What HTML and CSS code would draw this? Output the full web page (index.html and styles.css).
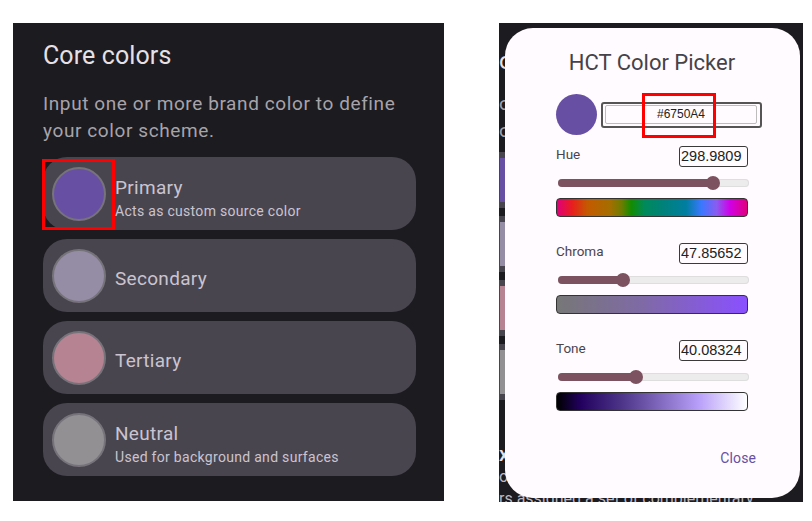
FILE: index.html
```html
<!DOCTYPE html>
<html lang="en">
<head>
<meta charset="utf-8">
<title>Core colors</title>
<link rel="stylesheet" href="styles.css">
</head>
<body>
<div class="page">
  <section class="core">
    <h1 class="core-title">Core colors</h1>
    <p class="core-desc">Input one or more brand color to define your color scheme.</p>
    <div class="cards">
      <div class="card">
        <span class="swatch sw-primary"></span>
        <div class="card-text two">
          <div class="card-name">Primary</div>
          <div class="card-sub">Acts as custom source color</div>
        </div>
        <span class="highlight hl-swatch"></span>
      </div>
      <div class="card">
        <span class="swatch sw-secondary"></span>
        <div class="card-text one">
          <div class="card-name">Secondary</div>
        </div>
      </div>
      <div class="card">
        <span class="swatch sw-tertiary"></span>
        <div class="card-text one">
          <div class="card-name">Tertiary</div>
        </div>
      </div>
      <div class="card">
        <span class="swatch sw-neutral"></span>
        <div class="card-text two">
          <div class="card-name">Neutral</div>
          <div class="card-sub">Used for background and surfaces</div>
        </div>
      </div>
    </div>
  </section>

  <section class="picker-area">
    <div class="backdrop">
      <div class="bd-title">o</div>
      <div class="bd-desc">ou<br>ou</div>
      <div class="bd-cards">
        <div class="bd-card"><span class="bd-dot sw-primary"></span></div>
        <div class="bd-card"><span class="bd-dot sw-secondary"></span></div>
        <div class="bd-card"><span class="bd-dot sw-tertiary"></span></div>
        <div class="bd-card"><span class="bd-dot sw-neutral"></span></div>
      </div>
      <div class="bd-head">xt</div>
      <div class="bd-line">ou</div>
      <div class="bd-line">rs assigned a set of complementary</div>
    </div>

    <div class="dialog">
      <h2 class="dlg-title">HCT Color Picker</h2>
      <div class="hex-row">
        <span class="swatch-lg"></span>
        <div class="hex-box">
          <div class="hex-input">#6750A4</div>
          <span class="highlight hl-hex"></span>
        </div>
      </div>

      <div class="field">
        <div class="field-head">
          <span class="field-label">Hue</span>
          <span class="field-input">298.9809</span>
        </div>
        <div class="slider" style="--v:81%"><span class="slider-fill"></span><span class="slider-thumb"></span></div>
        <div class="grad grad-hue"></div>
      </div>

      <div class="field">
        <div class="field-head">
          <span class="field-label">Chroma</span>
          <span class="field-input">47.85652</span>
        </div>
        <div class="slider" style="--v:34%"><span class="slider-fill"></span><span class="slider-thumb"></span></div>
        <div class="grad grad-chroma"></div>
      </div>

      <div class="field">
        <div class="field-head">
          <span class="field-label">Tone</span>
          <span class="field-input">40.08324</span>
        </div>
        <div class="slider" style="--v:41%"><span class="slider-fill"></span><span class="slider-thumb"></span></div>
        <div class="grad grad-tone"></div>
      </div>

      <div class="actions">
        <span class="close">Close</span>
      </div>
    </div>
  </section>
</div>
</body>
</html>
```

FILE: styles.css
```css
* { box-sizing: border-box; }

body {
  margin: 0;
  background: #ffffff;
  font-family: Roboto, "Noto Sans", sans-serif;
}

.page {
  display: flex;
  align-items: flex-start;
  gap: 55px;
  padding: 23px 0 0 13px;
}

/* ---------- left panel ---------- */
.core {
  width: 431px;
  height: 478px;
  background: #1c1b1f;
  padding: 17px 28px 0 30px;
}

.core-title {
  margin: 0;
  font-size: 25px;
  line-height: 32px;
  font-weight: 400;
  letter-spacing: 0.1px;
  color: #e6e1e5;
}

.core-desc {
  margin: 18px 0 0;
  font-size: 19px;
  line-height: 27px;
  letter-spacing: 0.6px;
  color: #a7a3ab;
}

.cards {
  display: flex;
  flex-direction: column;
  gap: 9px;
  margin-top: 13px;
}

.card {
  position: relative;
  height: 73px;
  background: #49454f;
  border-radius: 24px;
  display: flex;
  align-items: center;
  gap: 9px;
  padding-left: 9px;
}

.swatch {
  flex: none;
  width: 54px;
  height: 54px;
  border-radius: 50%;
  border: 2px solid #77737b;
}

.sw-primary { background: #6750a4; }
.sw-secondary { background: #958da5; }
.sw-tertiary { background: #b58392; }
.sw-neutral { background: #939094; }

.card-text { color: #cac4d0; }
.card-text.two { padding-top: 14px; }
.card-text.one { padding-top: 6px; }

.card-name {
  font-size: 19px;
  line-height: 22px;
  letter-spacing: 0.3px;
}

.card-sub {
  font-size: 14px;
  line-height: 25px;
  letter-spacing: 0.3px;
}

.highlight {
  position: absolute;
  border: 3px solid #ff0000;
}

.hl-swatch {
  left: -1px;
  top: 2px;
  width: 73px;
  height: 71px;
}

/* ---------- right panel ---------- */
.picker-area {
  position: relative;
  width: 304px;
  height: 479px;
  background: #1c1b1f;
  overflow: hidden;
}

.backdrop {
  display: flex;
  flex-direction: column;
  padding-top: 25px;
  white-space: nowrap;
}

.bd-title {
  font-size: 24px;
  line-height: 26px;
  color: #e6e1e5;
}

.bd-desc {
  margin-top: 16px;
  font-size: 19px;
  line-height: 27px;
  color: #a7a3ab;
}

.bd-cards {
  display: flex;
  flex-direction: column;
  gap: 8px;
  margin-top: 8px;
}

.bd-card {
  height: 56px;
  width: 40px;
  background: #48454e;
  padding: 6px 0 6px 1px;
}

.bd-dot {
  display: block;
  width: 30px;
  height: 44px;
}

.bd-head {
  margin-top: 42px;
  font-size: 20px;
  line-height: 24px;
  font-weight: 500;
  color: #e6e1e5;
}

.bd-line {
  font-size: 16px;
  line-height: 22px;
  color: #bdb8c2;
}

.dialog {
  position: absolute;
  left: 6px;
  top: 5px;
  width: 295px;
  height: 470px;
  background: #fffbfe;
  border-radius: 28px;
  padding: 21px 52px 0 51px;
  display: flex;
  flex-direction: column;
}

.dlg-title {
  margin: 0;
  text-align: center;
  font-size: 22px;
  line-height: 28px;
  font-weight: 400;
  color: #45424a;
}

.hex-row {
  display: flex;
  align-items: center;
  gap: 4px;
  margin-top: 17px;
}

.swatch-lg {
  flex: none;
  width: 41px;
  height: 41px;
  border-radius: 50%;
  background: #6750a4;
}

.hex-box {
  position: relative;
  flex: none;
  width: 161px;
  height: 26px;
  border: 2px solid #555555;
  border-radius: 3px;
  padding: 1px 3px 2px 2px;
  display: flex;
}

.hex-input {
  flex: 1;
  border: 1px solid #bdbdbd;
  border-radius: 2px;
  font-family: "Liberation Sans", Arial, sans-serif;
  font-size: 12px;
  line-height: 17px;
  text-align: center;
  color: #222222;
}

.hl-hex {
  left: 39px;
  top: -11px;
  width: 74px;
  height: 45px;
}

.field {
  display: flex;
  flex-direction: column;
  margin-top: 26px;
}

.hex-row + .field { margin-top: 11px; }

.field-head {
  display: flex;
  justify-content: space-between;
  align-items: flex-start;
  height: 21px;
}

.field-label {
  font-size: 13.5px;
  line-height: 16px;
  color: #49454f;
}

.field-input {
  width: 69px;
  height: 21px;
  border: 1px solid #3a3a3a;
  border-radius: 3px;
  padding-left: 1px;
  font-family: "Liberation Sans", Arial, sans-serif;
  font-size: 14.5px;
  line-height: 19px;
  color: #222222;
}

.slider {
  position: relative;
  width: 191px;
  height: 8px;
  margin: 12px 0 0 2px;
  border-radius: 4px;
  background: #ececec;
  box-shadow: inset 0 0 0 1px #dedede;
}

.slider-fill {
  display: block;
  width: var(--v);
  height: 100%;
  border-radius: 4px;
  background: #7d5260;
}

.slider-thumb {
  position: absolute;
  left: var(--v);
  top: 50%;
  width: 14px;
  height: 14px;
  margin: -7px 0 0 -7px;
  border-radius: 50%;
  background: #7d5260;
}

.grad {
  width: 192px;
  height: 19px;
  margin-top: 11px;
  border: 1px solid #333333;
  border-radius: 4px;
}

.grad-hue {
  background: linear-gradient(to right,
    #e0007a 0%, #e81e1e 8%, #c45a00 16%, #a46e00 28%, #6e7c00 34%,
    #138c00 39%, #008a5a 46%, #00827a 56%, #007ea0 68%, #3a78ff 76%,
    #8a5cf0 84%, #d000e8 91%, #e0007a 100%);
}

.grad-chroma {
  background: linear-gradient(to right, #777777 0%, #7f6aa6 45%, #8a50ff 100%);
}

.grad-tone {
  background: linear-gradient(to right,
    #000000 0%, #21005d 12%, #4f378b 35%, #8a73c8 58%, #b69df8 74%, #ffffff 100%);
}

.actions {
  display: flex;
  justify-content: flex-end;
  margin: 37px -8px 0 0;
}

.close {
  font-size: 14px;
  line-height: 20px;
  font-weight: 400;
  letter-spacing: 0.1px;
  color: #6750a4;
}
```
